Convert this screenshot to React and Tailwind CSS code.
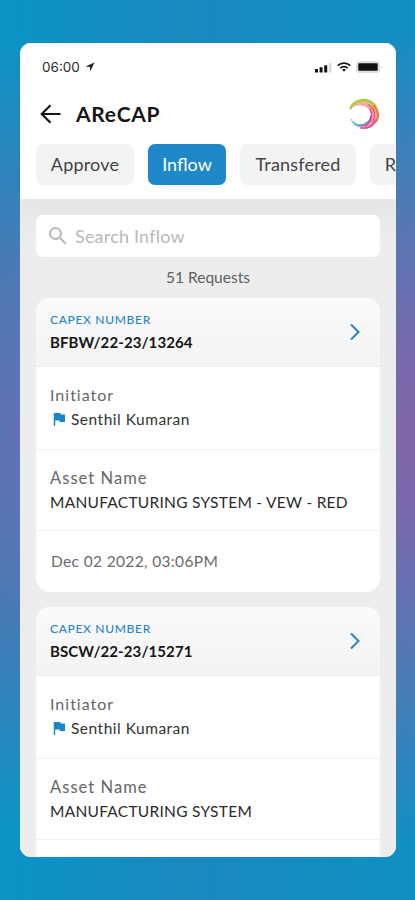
import { MdFlag, MdSearch } from "react-icons/md";

const TABS = [
  { label: "Approve", width: "w-[98px]" },
  { label: "Inflow", width: "w-[78px]", active: true },
  { label: "Transfered", width: "w-[116px]" },
  { label: "R", width: "w-[41px]" },
];

const REQUESTS = [
  {
    number: "BFBW/22-23/13264",
    initiator: "Senthil Kumaran",
    asset: "MANUFACTURING SYSTEM - VEW - RED",
    date: "Dec 02 2022, 03:06PM",
  },
  {
    number: "BSCW/22-23/15271",
    initiator: "Senthil Kumaran",
    asset: "MANUFACTURING SYSTEM",
  },
];

function StatusBar() {
  return (
    <div className="flex h-[48px] items-center justify-between pl-[22px] pr-[13px]">
      <div className="flex items-center gap-[5px]">
        <span className="pt-[1px] font-['Inter'] text-[13.5px] leading-none text-[#2b2b2b]">06:00</span>
        <svg width="10" height="10" viewBox="0 0 10 10" fill="#222">
          <path d="M9.5 0.5L0.5 4.5L5 5L5.2 9.5Z" />
        </svg>
      </div>
      <div className="flex items-center gap-[5px]">
        <svg width="17" height="11" viewBox="0 0 17 11" fill="#111">
          <rect x="0" y="7" width="3" height="3.5" rx="0.5" />
          <rect x="4.6" y="5.3" width="3" height="5.2" rx="0.5" />
          <rect x="9.2" y="3.2" width="3" height="7.3" rx="0.5" />
          <rect x="13.8" y="1" width="2.6" height="9.5" rx="0.5" fill="#d6d6d6" />
        </svg>
        <svg width="14" height="10" viewBox="0 0 14 10" fill="none" stroke="#151515" strokeWidth="1.8">
          <path d="M0.7 3.6C4.4 0.2 9.6 0.2 13.3 3.6" />
          <path d="M3.2 6.1C5.3 4.2 8.7 4.2 10.8 6.1" />
          <path d="M5 7.5Q7 6.1 9 7.5L7 9.7Z" fill="#151515" stroke="none" />
        </svg>
        <svg width="27" height="12" viewBox="0 0 27 12">
          <rect x="0.7" y="0.7" width="22.6" height="10.6" rx="2" fill="#e4e4e4" stroke="#dcdcdc" strokeWidth="1.2" />
          <rect x="2.3" y="2.2" width="19.4" height="7.6" rx="0.8" fill="#111" />
          <path d="M24.8 4.2Q26.6 6 24.8 7.8Z" fill="#ccc" />
        </svg>
      </div>
    </div>
  );
}

function SwirlLogo() {
  return (
    <svg width="32" height="32" viewBox="0 0 32 32" fill="none" strokeLinecap="round">
      <path d="M2 12C6 3 16 -1 24 4C32 9 33 22 25 28C20 32 12 31 7 27C15 30 23 25 23 17C23 8 9 3 2 12Z" fill="#f3a3b4" />
      <path d="M2.5 10C7 0.5 21-1 27.5 8.5" stroke="#a5cd39" strokeWidth="2.4" />
      <path d="M7 6.5C14 2 24 5 27 12" stroke="#f2c25a" strokeWidth="1.3" />
      <path d="M26 8C31 13 31 19 28.5 23" stroke="#ee7a35" strokeWidth="2" />
      <path d="M21 7C27 11 28 18 25 24" stroke="#ea5560" strokeWidth="1.4" />
      <path d="M28 22C25 28 19 31 13 30" stroke="#e5569b" strokeWidth="1.8" />
      <path d="M22 11C25 17 24 24 17 28" stroke="#d9488f" strokeWidth="1.2" />
      <path d="M23 18C22 24 17 28 10 28" stroke="#a14c9c" strokeWidth="1.2" />
      <path d="M20 24C15 28 9 28 5 24" stroke="#4aa3cf" strokeWidth="1.3" />
      <path d="M3 21C5 26 9 29 13 29" stroke="#8fcbe4" strokeWidth="1.1" />
    </svg>
  );
}

function RequestCard({ request }) {
  return (
    <article className="h-[293.5px] shrink-0 overflow-hidden whitespace-nowrap rounded-[14px] bg-white">
      <header className="flex h-[69px] items-center justify-between border-b border-[#ececec] bg-linear-to-b from-[#fafafa] to-[#f3f3f3] pl-[14px] pr-[19px]">
        <div className="pt-[1px]">
          <div className="text-[12px] font-medium leading-[18px] tracking-[0.68px] text-[#2a86c8]">CAPEX NUMBER</div>
          <div className="mt-[1px] text-[15px] font-bold leading-[24px] tracking-[0.1px] text-[#161616]">{request.number}</div>
        </div>
        <svg width="12" height="18" viewBox="0 0 12 18" fill="none" stroke="#2683c6" strokeWidth="2">
          <path d="M2 1.5L9.5 9L2 16.5" />
        </svg>
      </header>
      <div className="h-[83px] border-b border-[#f0f0f0] pl-[14px] pt-[16px]">
        <div className="text-[16px] leading-[24px] tracking-[1px] text-[#666]">Initiator</div>
        <div className="flex items-center">
          <MdFlag className="size-[18px] text-[#1c86cb]" />
          <span className="ml-[3px] text-[15.5px] leading-[24px] tracking-[0.5px] text-[#333]">{request.initiator}</span>
        </div>
      </div>
      <div className="h-[81px] border-b border-[#f0f0f0] pl-[14px] pt-[16px]">
        <div className="text-[16.5px] leading-[24px] tracking-[1.05px] text-[#666]">Asset Name</div>
        <div className="text-[15.5px] leading-[24px] tracking-[0.27px] text-[#2b2b2b]">{request.asset}</div>
      </div>
      {request.date && (
        <div className="pl-[15px] pt-[18px] text-[15.5px] leading-[24px] tracking-[0.35px] text-[#6a6a6a]">{request.date}</div>
      )}
    </article>
  );
}

export default function App() {
  return (
    <div className="h-[900px] w-[415px] overflow-hidden bg-[radial-gradient(ellipse_200px_420px_at_440px_435px,#8a62a8_0%,#7869ac_25%,#5a76b3_50%,transparent_100%),radial-gradient(ellipse_170px_400px_at_30px_435px,#666fb1_0%,#4e78b4_40%,transparent_100%),linear-gradient(90deg,#0a94c6,#1a89c0_45%,#0f90c4)] pl-[20px] pt-[43px] font-['Lato',sans-serif]">
      <main className="flex h-[814px] w-[376px] flex-col overflow-hidden rounded-[11px] bg-[#ececec]">
        <div className="h-[156px] shrink-0 bg-white">
          <StatusBar />
          <div className="flex h-[46px] items-center pl-[20px] pr-[16px]">
            <svg width="22" height="20" viewBox="0 0 22 20" fill="none" stroke="#161616" strokeWidth="2.1">
              <path d="M20.5 10H2M10.5 1.2L1.7 10L10.5 18.8" />
            </svg>
            <h1 className="ml-[14px] flex-1 text-[21px] font-bold tracking-[0.7px] text-[#161616]">AReCAP</h1>
            <SwirlLogo />
          </div>
          <nav className="mt-[7px] flex gap-[14px] pl-[16px]">
            {TABS.map((tab) => (
              <button
                key={tab.label}
                className={`h-[41px] shrink-0 rounded-[7px] text-[18px] ${tab.width} ${tab.active ? "bg-[#1f88c9] text-white" : "bg-[#f3f3f3] tracking-[0.2px] text-[#444]"}`}
              >
                {tab.label}
              </button>
            ))}
          </nav>
        </div>
        <div className="flex min-h-0 flex-1 flex-col bg-linear-to-b from-[#e6e6e6] to-[#ededed] to-[40px] px-[16px] pt-[16px]">
          <div className="flex h-[42px] shrink-0 items-center rounded-[7px] bg-white pl-[10px] text-[#b8b8b8]">
            <MdSearch className="size-[24px]" />
            <span className="ml-[5px] pt-[1px] text-[18px] tracking-[0.2px]">Search Inflow</span>
          </div>
          <p className="flex h-[41px] shrink-0 items-center justify-center text-[15.5px] text-[#606060]">51 Requests</p>
          <div className="flex flex-col gap-[15px]">
            {REQUESTS.map((request) => (
              <RequestCard key={request.number} request={request} />
            ))}
          </div>
        </div>
      </main>
    </div>
  );
}
